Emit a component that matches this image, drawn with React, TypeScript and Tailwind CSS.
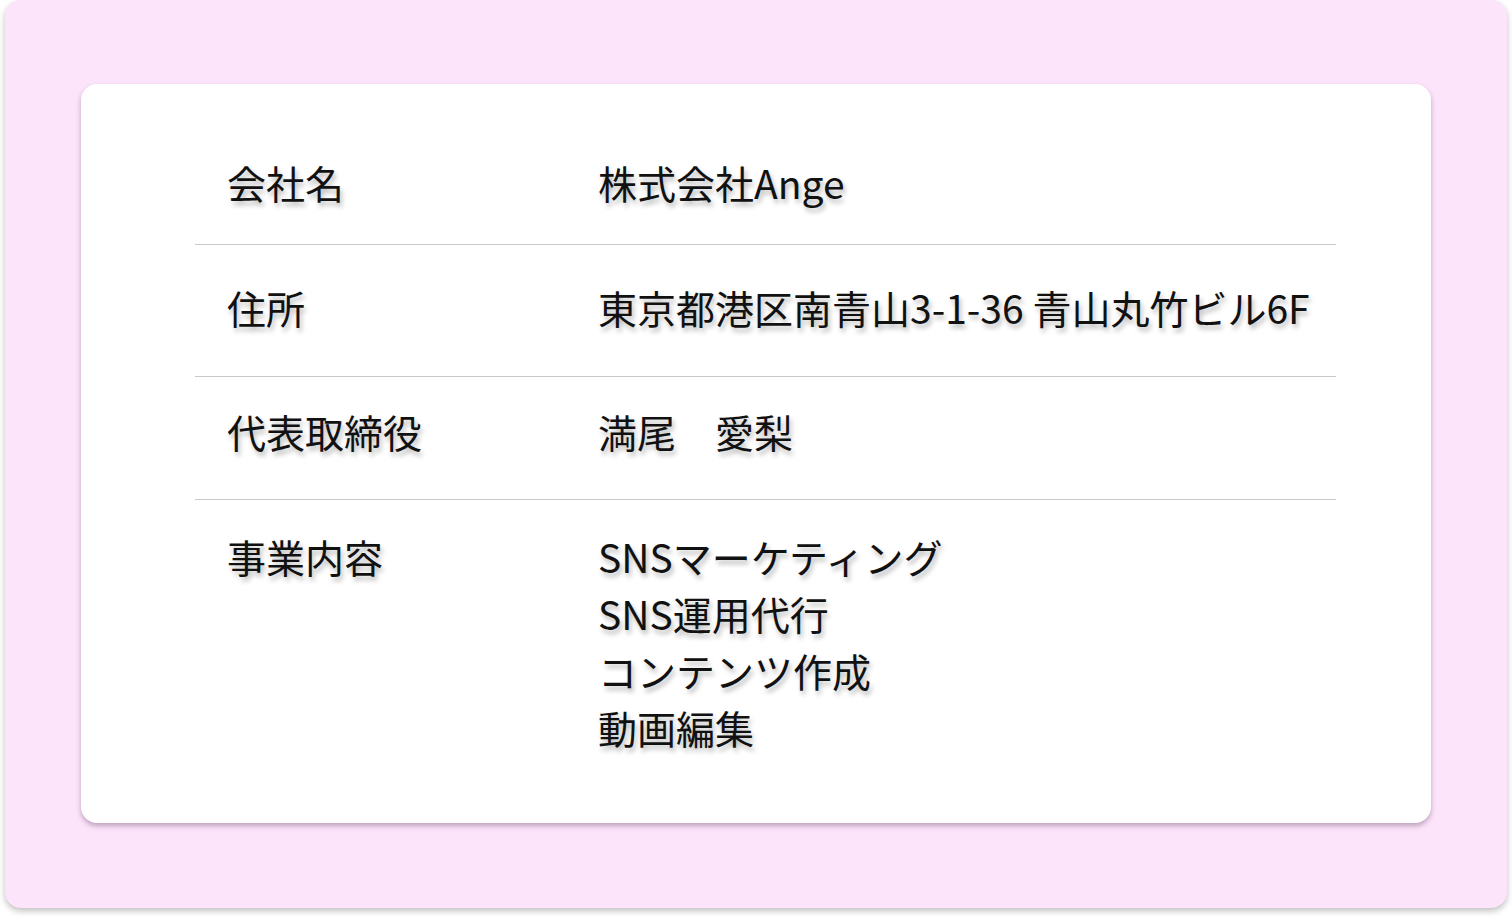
const rows = [
  { label: "会社名", value: ["株式会社Ange"], pt: "pt-[70px]", pb: "pb-[33px]" },
  { label: "住所", value: ["東京都港区南青山3-1-36 青山丸竹ビル6F"], pt: "pt-[34px]", pb: "pb-[40px]" },
  { label: "代表取締役", value: ["満尾　愛梨"], pt: "pt-[26px]", pb: "pb-[39px]" },
  {
    label: "事業内容",
    value: ["SNSマーケティング", "SNS運用代行", "コンテンツ作成", "動画編集"],
    pt: "pt-[28px]",
    pb: "pb-[68px]",
  },
];

export default function App() {
  return (
    <div className="w-screen h-[921px] bg-white overflow-hidden">
      <div className="mx-[5px] h-[908px] rounded-[16px] bg-[#fce4fa] shadow-[0_3px_6px_rgba(0,0,0,0.25)] pt-[84px] pl-[76px]">
        <div className="w-[1350px] h-[739px] bg-white rounded-[16px] shadow-[0_3px_5px_rgba(80,40,80,0.35)] pl-[114px]">
          <div
            className="w-[1141px] text-[39px] leading-[57px] text-[#111] [text-shadow:2px_4px_5px_rgba(0,0,0,0.28)]"
            style={{ fontFamily: '"Noto Sans CJK JP", "Noto Sans", sans-serif' }}
          >
            {rows.map((r, i) => (
              <div
                key={r.label}
                className={`flex ${r.pt} ${r.pb} ${i < rows.length - 1 ? "border-b border-[#c8c8c8]" : ""}`}
              >
                <div className="w-[403px] pl-[32px] shrink-0">{r.label}</div>
                <div className="flex flex-col">
                  {r.value.map((v) => (
                    <div key={v} className="whitespace-nowrap">{v}</div>
                  ))}
                </div>
              </div>
            ))}
          </div>
        </div>
      </div>
    </div>
  );
}
